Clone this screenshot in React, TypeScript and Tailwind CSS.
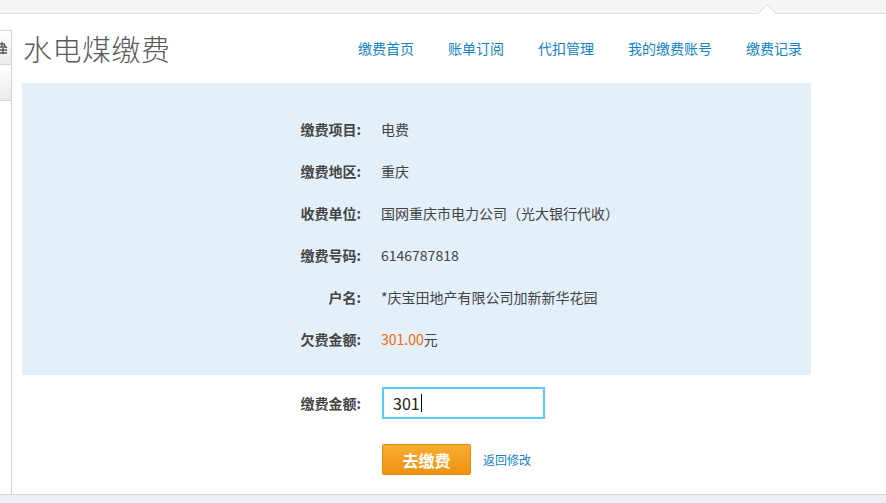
import React from "react";

const navLinks = ["缴费首页", "账单订阅", "代扣管理", "我的缴费账号", "缴费记录"];

const billRows: { label: string; value: React.ReactNode }[] = [
  { label: "缴费项目:", value: "电费" },
  { label: "缴费地区:", value: "重庆" },
  { label: "收费单位:", value: "国网重庆市电力公司（光大银行代收）" },
  { label: "缴费号码:", value: "6146787818" },
  { label: "户名:", value: "*庆宝田地产有限公司加新新华花园" },
  {
    label: "欠费金额:",
    value: (
      <>
        <span className="text-[#ff6600]">301.00</span>元
      </>
    ),
  },
];

const font = { fontFamily: '"Noto Sans CJK SC", "Noto Sans", sans-serif' };

const App: React.FC = () => {
  return (
    <div className="relative flex h-[503px] w-[886px] flex-col overflow-hidden bg-white text-[14px] text-[#444]" style={font}>
      {/* top strip with pointer notch */}
      <div className="h-[14px] shrink-0 border-b border-[#e0e0e0] bg-[#f5f5f5]" />
      <svg className="absolute left-[758px] top-[4px]" width="18" height="11" viewBox="0 0 18 11">
        <path d="M0 10 L9 1 L18 10 Z" fill="#ffffff" />
        <path d="M0 9.5 L9 1 L18 9.5" fill="none" stroke="#dcdcdc" strokeWidth="1" />
      </svg>

      <div className="flex flex-1">
        {/* left sidebar stub */}
        <div className="w-[12px] shrink-0">
          <div className="mt-[16px] h-[calc(100%-16px)] border-r border-[#cfcfcf]">
            <div className="h-[35px] overflow-hidden border-y border-[#d6d6d6] bg-gradient-to-b from-white to-[#ececec]">
              <svg className="mt-[11px]" width="8" height="12" viewBox="0 0 8 12">
                <path d="M0 2h5M2 0v5M0 5h6M4 3l3 3M0 8h7M3 6v6M0 11h7" stroke="#555" strokeWidth="1.3" fill="none" />
              </svg>
            </div>
            <div className="h-[36px] border-b border-[#d6d6d6] bg-gradient-to-b from-white to-[#ececec]" />
          </div>
        </div>

        {/* main */}
        <div className="flex-1 pl-[10px]">
          <div className="flex h-[69px] w-[789px] items-center justify-between pr-[9px]">
            <h1 className="ml-[1px] text-[29px] font-light leading-none tracking-[0.5px] text-[#5a5a5a]">水电煤缴费</h1>
            <nav className="flex gap-[34px] text-[14px] text-[#1183c6]">
              {navLinks.map((l) => (
                <a key={l} className="cursor-pointer">
                  {l}
                </a>
              ))}
            </nav>
          </div>

          <div className="w-[789px] bg-[#e3eff9] pt-[25px] pb-[15px]">
            {billRows.map((r) => (
              <div key={r.label} className="flex h-[42px] items-center">
                <div className="w-[339px] text-right font-bold text-[#444]">{r.label}</div>
                <div className="pl-[20px] text-[#444]">{r.value}</div>
              </div>
            ))}
          </div>

          <div className="mt-[12px] flex items-center">
            <div className="w-[339px] text-right font-bold text-[#444]">缴费金额:</div>
            <div className="ml-[21px] flex h-[32px] w-[163px] items-center border-2 border-[#52cdf7] bg-white pl-[9px] text-[16px] text-[#222]">
              301
              <span className="ml-[1px] inline-block h-[18px] w-px bg-black" />
            </div>
          </div>

          <div className="mt-[25px] flex items-center pl-[360px]">
            <button className="h-[31px] w-[89px] rounded-[2px] border border-[#e08a10] bg-gradient-to-b from-[#f9ad30] to-[#ee910e] text-[16px] font-bold text-white">
              去缴费
            </button>
            <a className="ml-[12px] cursor-pointer text-[12px] text-[#1183c6]">返回修改</a>
          </div>
        </div>
      </div>

      {/* bottom strip */}
      <div className="h-[9px] shrink-0 border-t border-[#d2d8de] bg-[#e9eff5]" />
    </div>
  );
};

export default App;
